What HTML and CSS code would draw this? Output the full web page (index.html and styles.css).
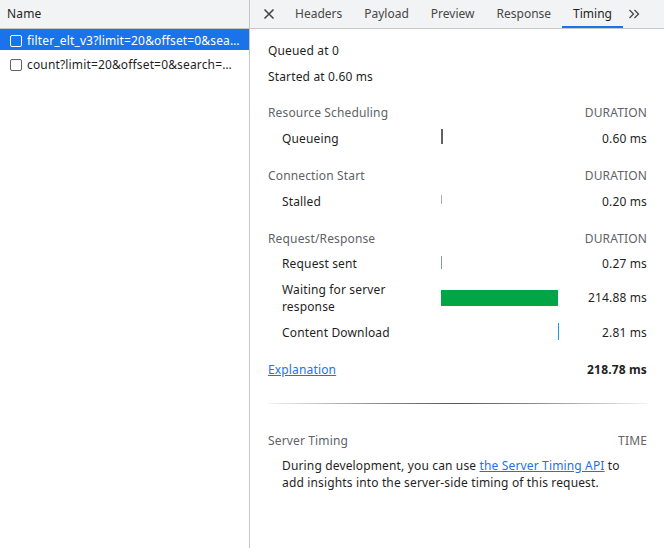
FILE: index.html
```html
<!DOCTYPE html>
<html>
<head>
<meta charset="utf-8">
<link rel="stylesheet" href="styles.css">
</head>
<body>
<div class="app">
  <aside class="list">
    <div class="list-head">Name</div>
    <div class="req selected"><span class="cb"></span><span class="req-name">filter_elt_v3?limit=20&amp;offset=0&amp;search=&amp;sort=name</span></div>
    <div class="req"><span class="cb"></span><span class="req-name">count?limit=20&amp;offset=0&amp;search=&amp;sort=name</span></div>
  </aside>
  <main class="detail">
    <nav class="tabs">
      <span class="close"><svg width="12" height="12" viewBox="0 0 12 12"><path d="M1.5 1.5 L10.5 10.5 M10.5 1.5 L1.5 10.5" stroke="#474747" stroke-width="1.6" fill="none"/></svg></span>
      <span class="tab">Headers</span>
      <span class="tab">Payload</span>
      <span class="tab">Preview</span>
      <span class="tab">Response</span>
      <span class="tab active">Timing</span>
      <span class="more"><svg width="12" height="10" viewBox="0 0 12 10"><path d="M1.5 1 L5.5 5 L1.5 9 M6.5 1 L10.5 5 L6.5 9" stroke="#474747" stroke-width="1.3" fill="none"/></svg></span>
    </nav>
    <section class="timing">
      <div class="info">Queued at 0</div>
      <div class="info">Started at 0.60 ms</div>

      <div class="sect rs"><span>Resource Scheduling</span><span>DURATION</span></div>
      <div class="row"><span class="lbl">Queueing</span><span class="bars"><i class="b queueing"></i></span><span class="dur">0.60 ms</span></div>

      <div class="sect cs"><span>Connection Start</span><span>DURATION</span></div>
      <div class="row"><span class="lbl">Stalled</span><span class="bars"><i class="b stalled"></i></span><span class="dur">0.20 ms</span></div>

      <div class="sect rr"><span>Request/Response</span><span>DURATION</span></div>
      <div class="row"><span class="lbl">Request sent</span><span class="bars"><i class="b sending"></i></span><span class="dur">0.27 ms</span></div>
      <div class="row tall"><span class="lbl">Waiting for server<br>response</span><span class="bars"><i class="b waiting"></i></span><span class="dur">214.88 ms</span></div>
      <div class="row"><span class="lbl">Content Download</span><span class="bars end"><i class="b download"></i></span><span class="dur">2.81 ms</span></div>

      <div class="total"><a href="#" class="link">Explanation</a><span class="sum">218.78 ms</span></div>
      <div class="divider"></div>

      <div class="sect server"><span>Server Timing</span><span>TIME</span></div>
      <p class="note">During development, you can use <a href="#" class="link">the Server Timing API</a> to add insights into the server-side timing of this request.</p>
    </section>
  </main>
</div>
</body>
</html>
```
FILE: styles.css
```css
* { box-sizing: border-box; }
html, body { margin: 0; padding: 0; }
body {
  font-family: "Noto Sans", "Open Sans", sans-serif;
  font-size: 12px;
  letter-spacing: 0.15px;
  color: #1f1f1f;
  background: #fff;
  width: 664px;
  height: 548px;
  overflow: hidden;
}
.app { display: flex; height: 548px; }

.list {
  width: 250px;
  flex: none;
  border-right: 1px solid #c7c7c7;
}
.list-head {
  height: 29px;
  line-height: 28px;
  padding-left: 7px;
  background: #f1f3f4;
  border-bottom: 1px solid #c7c7c7;
  color: #1f1f1f;
}
.req {
  display: flex;
  align-items: center;
  height: 21px;
  padding: 2px 9px 0 10px;
  color: #1f1f1f;
}
.req + .req { height: 25px; padding-top: 4px; }
.req.selected { background: #1a73e8; color: #fff; }
.cb {
  flex: none;
  width: 12px;
  height: 12px;
  border: 1.5px solid #5f6368;
  border-radius: 2px;
  margin-right: 5px;
}
.selected .cb { border-color: #fff; }
.req-name {
  white-space: nowrap;
  overflow: hidden;
  text-overflow: ellipsis;
}

.detail { flex: 1; display: flex; flex-direction: column; }
.tabs {
  display: flex;
  align-items: stretch;
  height: 29px;
  background: #f1f3f4;
  border-bottom: 1px solid #c7c7c7;
  padding-left: 13px;
  color: #474747;
  letter-spacing: 0;
}
.close { display: flex; align-items: center; width: 21px; }
.close svg { display: block; }
.tab {
  display: flex;
  align-items: center;
  padding: 0 11px;
  margin-top: -1px;
}
.tab.active {
  color: #1f1f1f;
  box-shadow: inset 0 -2px 0 #1a73e8;
}
.more { display: flex; align-items: center; padding-left: 5px; }

.timing { padding: 9px 17px 0 18px; }
.info { height: 26px; line-height: 26px; }
.sect {
  display: flex;
  justify-content: space-between;
  height: 26px;
  line-height: 26px;
  color: #5f6368;
}
.sect.rs { margin-top: 10px; height: 25px; }
.sect.cs { margin-top: 12px; height: 25px; }
.sect.rr { margin-top: 12px; height: 24px; line-height: 26px; }
.row {
  display: grid;
  grid-template-columns: 173px 118px 1fr;
  align-items: center;
  height: 26px;
}
.row.tall { height: 43px; line-height: 17px; }
.lbl { padding-left: 14px; }
.dur { text-align: right; }
.bars { display: flex; height: 26px; align-items: center; }
.bars.end { justify-content: flex-end; }
.b { display: block; }
.queueing { width: 2px; height: 15px; background: #5f6368; margin-top: -3px; }
.stalled { width: 1px; height: 9px; background: #a8abb0; margin-top: -4px; }
.sending { width: 1px; height: 13px; background: #8a9aa3; margin-top: -2px; }
.waiting { width: 117px; height: 16px; background: #00a646; }
.download { width: 1px; height: 17px; background: #1a9bf0; margin-top: -1px; }

.total {
  display: flex;
  justify-content: space-between;
  align-items: center;
  height: 26px;
  margin-top: 11px;
}
.link { color: #1a73e8; text-decoration: underline; }
.sum { font-weight: bold; color: #1f1f1f; }
.divider {
  height: 1px;
  margin-top: 21px;
  background: linear-gradient(90deg, #f2f2f2 0%, #8a8a8a 30%, #555 50%, #8a8a8a 70%, #f2f2f2 100%);
}
.sect.server { margin-top: 24px; }
.note {
  margin: 3px 0 0 14px;
  line-height: 17px;
  padding-right: 10px;
}
```
